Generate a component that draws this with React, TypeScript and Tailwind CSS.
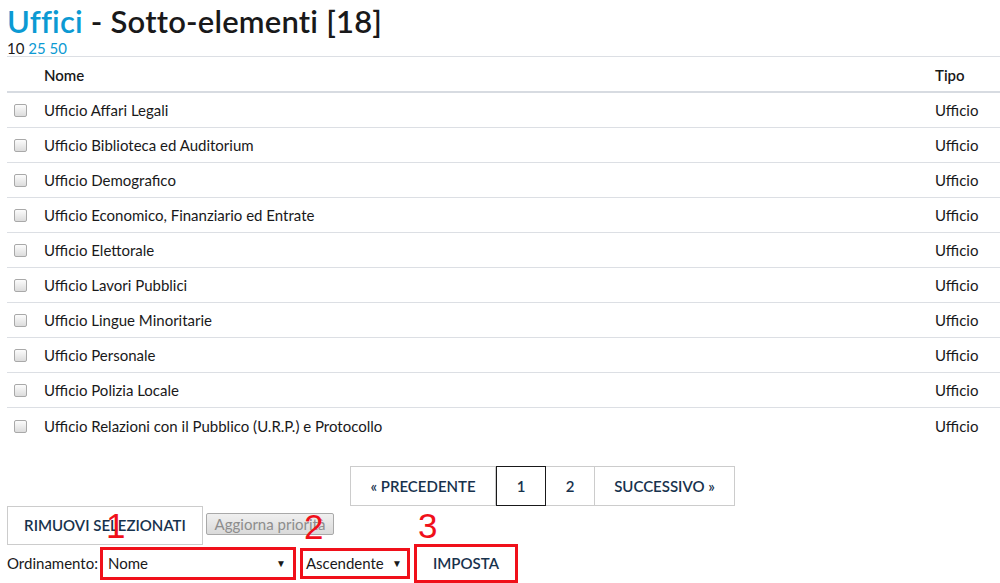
import React from "react";

const rows = [
  "Ufficio Affari Legali",
  "Ufficio Biblioteca ed Auditorium",
  "Ufficio Demografico",
  "Ufficio Economico, Finanziario ed Entrate",
  "Ufficio Elettorale",
  "Ufficio Lavori Pubblici",
  "Ufficio Lingue Minoritarie",
  "Ufficio Personale",
  "Ufficio Polizia Locale",
  "Ufficio Relazioni con il Pubblico (U.R.P.) e Protocollo",
];

function Checkbox() {
  return (
    <span className="inline-block h-[13px] w-[13px] rounded-[2px] border border-[#a9a9a9] bg-gradient-to-b from-[#fcfcfc] to-[#dcdcdc]" />
  );
}

export default function App() {
  return (
    <div className="relative min-h-[583px] w-[1000px] overflow-hidden bg-white font-['Lato',sans-serif] text-[#19191a]">
      <div className="pl-[7px]">
        <h1 className="pt-[2px] text-[31px] font-semibold leading-[38px] tracking-[0.2px]">
          <span className="text-[#0c9ad3]">Uffici</span> - Sotto-elementi [18]
        </h1>
        <div className="text-[15px] leading-[16px]">
          <span>10</span> <span className="text-[#0c9ad3]">25</span>{" "}
          <span className="text-[#0c9ad3]">50</span>
        </div>
      </div>

      <div className="ml-[7px]">
        <div className="flex h-[37px] items-center border-t border-b-2 border-t-[#dcdfe4] border-b-[#d7dbe1] pt-[2px] text-[15px] font-semibold">
          <div className="w-[37px]" />
          <div className="flex-1">Nome</div>
          <div className="w-[65px]">Tipo</div>
        </div>
        {rows.map((r, i) => (
          <div
            key={r}
            className={`flex h-[35px] items-center pt-px text-[15px] ${
              i < rows.length - 1 ? "border-b border-[#dcdfe4]" : ""
            }`}
          >
            <div className="flex w-[37px] items-center pl-[7px]">
              <Checkbox />
            </div>
            <div className="flex-1">{r}</div>
            <div className="w-[65px]">Ufficio</div>
          </div>
        ))}
      </div>

      <div className="ml-[350px] mt-[23px] flex h-[40px] text-[15px] font-semibold text-[#17324d]">
        <div className="flex w-[146px] items-center justify-center border border-[#cccccc]">
          « PRECEDENTE
        </div>
        <div className="flex w-[50px] items-center justify-center border border-[#19191a]">
          1
        </div>
        <div className="flex w-[49px] items-center justify-center border border-l-0 border-[#cccccc]">
          2
        </div>
        <div className="flex w-[140px] items-center justify-center border border-l-0 border-[#cccccc]">
          SUCCESSIVO »
        </div>
      </div>

      <div className="ml-[7px] flex items-start">
        <div className="flex h-[39px] w-[196px] items-center justify-center border border-[#cccccc] text-[15px] font-semibold text-[#17324d]">
          RIMUOVI SELEZIONATI
        </div>
        <div className="ml-[3px] mt-[7px] flex h-[22px] w-[128px] items-center justify-center rounded-[2px] border border-[#a9a9a9] bg-gradient-to-b from-[#f0f0f0] to-[#dadada] text-[15px] text-[#8d8d8d]">
          Aggiorna priorità
        </div>
      </div>

      <div className="ml-[7px] mt-[-1px] flex items-center text-[15px]">
        <span>Ordinamento:</span>
        <div className="relative ml-[2px] flex h-[33px] w-[196px] items-center justify-between border-[3px] border-[#f0101a] pl-[5px] pr-[7px]">
          <span>Nome</span>
          <span className="text-[10px]">▼</span>
          <span className="absolute left-[3px] top-[-42px] font-['Liberation_Sans',sans-serif] text-[35px] leading-[36px] text-[#f0101a]">
            1
          </span>
        </div>
        <div className="relative ml-[4px] flex h-[31px] w-[110px] items-center justify-between border-[3px] border-[#f0101a] pl-[3px] pr-[5px]">
          <span>Ascendente</span>
          <span className="text-[10px]">▼</span>
          <span className="absolute left-[1px] top-[-42px] font-['Liberation_Sans',sans-serif] text-[35px] leading-[36px] text-[#f0101a]">
            2
          </span>
        </div>
        <div className="relative ml-[4px] flex h-[39px] w-[104px] items-center justify-center border-[3px] border-[#f0101a] text-[15px] font-semibold text-[#17324d]">
          IMPOSTA
          <span className="absolute left-[1px] top-[-39px] font-['Liberation_Sans',sans-serif] text-[35px] font-normal leading-[36px] text-[#f0101a]">
            3
          </span>
        </div>
      </div>
    </div>
  );
}
